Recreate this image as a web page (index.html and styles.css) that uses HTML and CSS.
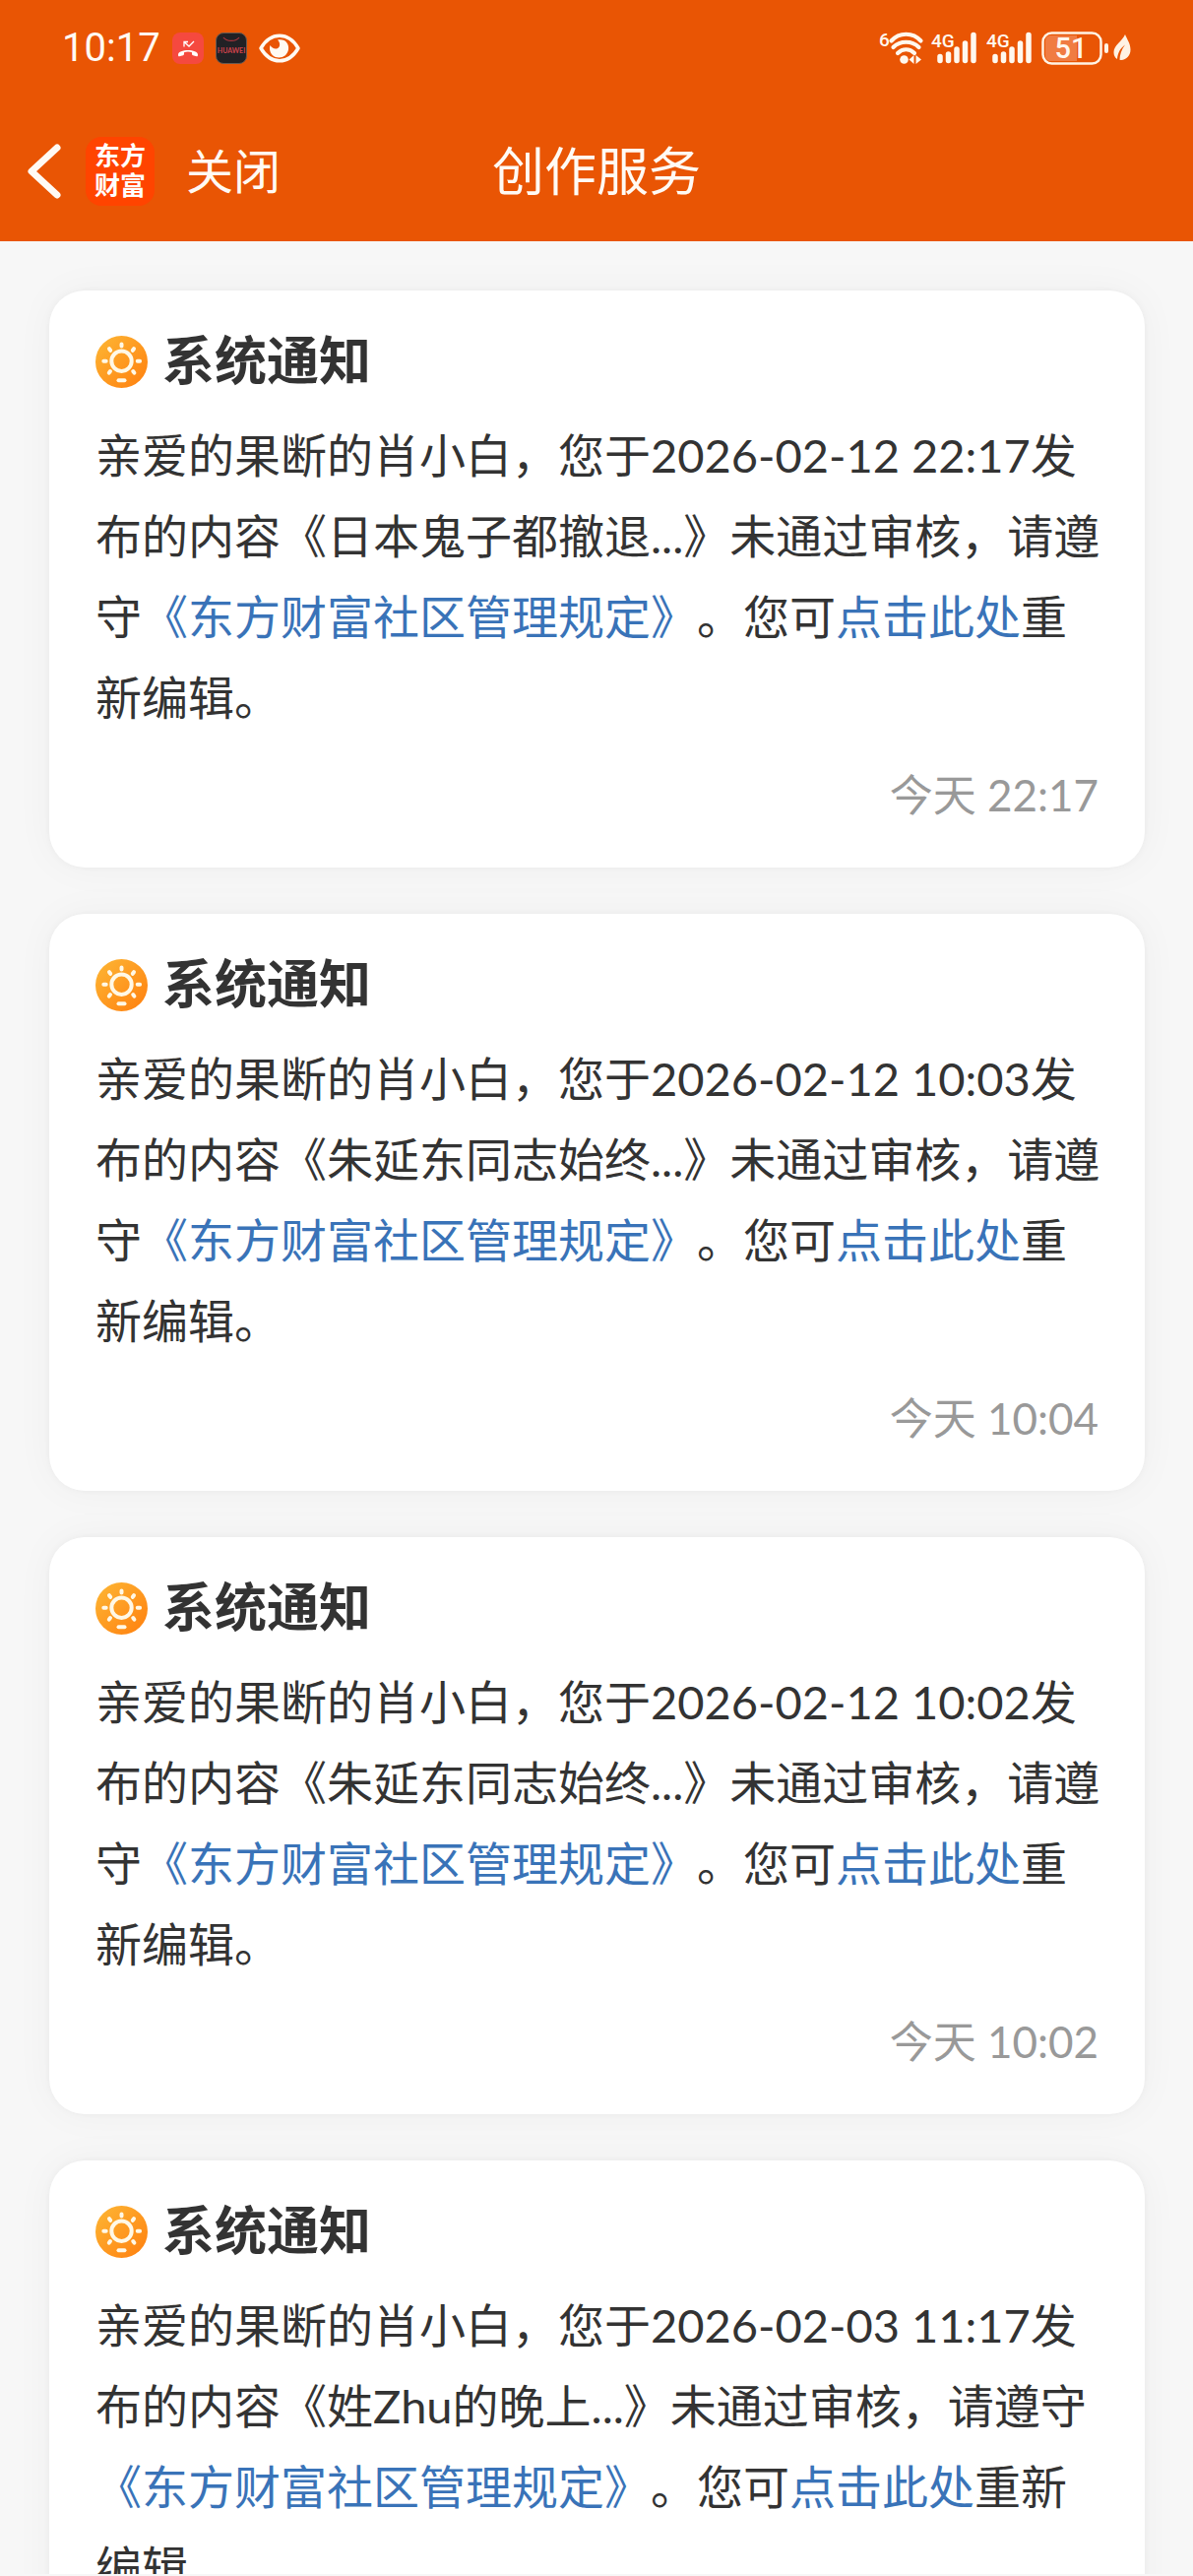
FILE: index.html
```html
<!DOCTYPE html>
<html lang="zh-CN">
<head>
    <meta charset="UTF-8">
    <meta name="viewport" content="width=device-width, initial-scale=1.0">
    <title>创作服务</title>
    <link rel="stylesheet" href="styles.css">
</head>
<body>
    <!-- shared icons -->
    <svg class="sprite" width="0" height="0">
        <defs>
            <linearGradient id="sunFill" x1="0" y1="0" x2="1" y2="1">
                <stop offset="0" stop-color="#fdb735"/>
                <stop offset="1" stop-color="#ff7f0e"/>
            </linearGradient>
        </defs>
        <symbol id="sun" viewBox="0 0 53 53">
            <circle cx="26.5" cy="26.5" r="26.5" fill="url(#sunFill)"/>
            <g fill="none" stroke="#fff8e6" stroke-width="4" stroke-linecap="round">
                <circle cx="26.5" cy="25.7" r="10.2"/>
                <path d="M26.5 8.6v2M8.3 25.7h2.4M42.7 25.7h2.4M14 13.2l1.2 1.6M39 13.2l-1.2 1.6M13.8 37.6l1.2-1.6M39.4 37.6l-1.2-1.6"/>
                <path d="M23.5 45.3h6"/>
            </g>
        </symbol>
    </svg>

    <header>
        <div class="status-bar">
            <div class="status-left">
                <span class="clock">10:17</span>
                <svg class="app-icon" viewBox="0 0 32 32">
                    <rect width="32" height="32" rx="8" fill="#f5493f"/>
                    <path d="M12 14.5V9.5h4M12 9.5l5 4.5 5-5" fill="none" stroke="#fff" stroke-width="1.3"/>
                    <path d="M6 22.5c0-6 20-6 20 0 0 1.800-.5 2-2 1.500l-3-.8c-1.200-.4-1-1.200-1-3-2-.8-6-.8-8 0 0 1.800.2 2.600-1 3l-3 .8c-1.500.5-2 .3-2-1.500z" fill="#fff"/>
                </svg>
                <svg class="app-icon" viewBox="0 0 32 32">
                    <rect x=".5" y=".5" width="31" height="31" rx="7.5" fill="#222125" stroke="#6b5a50"/>
                    <path d="M8 5c3 4.500 13 4.500 16 0" fill="none" stroke="#a8343c" stroke-width="1.2"/>
                    <text x="16" y="20.5" class="brand">HUAWEI</text>
                </svg>
                <svg class="eye-icon" viewBox="0 0 42 30">
                    <path d="M2 15C12-2 30-2 40 15 30 32 12 32 2 15z" fill="none" stroke="#fffaf2" stroke-width="3.5" stroke-linejoin="round"/>
                    <path d="M19 6.500c8-1.500 12 4 11 10-1 5-5 8-9.500 8-5 0-9-3.500-9.500-8.500 0-1.500 0-2.500.5-4 1.500 2.500 4 4 6.500 3.500 3.500-1 4.500-5.500 1-9z" fill="#fffaf2"/>
                </svg>
            </div>
            <div class="status-right">
                <svg class="wifi-icon" viewBox="0 0 45 34">
                    <text x="0" y="15" class="net-label">6</text>
                    <g fill="none" stroke="#fff8ee" stroke-width="4.2" stroke-linecap="round">
                        <path d="M12.500 9.500c8-9 22-9 30 0M14.500 16c7-7 19-7 26 0M19 22c5-5 12-5 17 0"/>
                    </g>
                    <circle cx="25.5" cy="28.5" r="4.3" fill="#fff8ee"/>
                    <path d="M35.500 24v9l-5-4.500zM37.500 24v9l5.500-4.500z" fill="#fff8ee"/>
                </svg>
                <svg class="signal-icon" viewBox="0 0 48 34">
                    <text x="0" y="16" class="net-label">4G</text>
                    <path d="M9 25.500v4M17.500 23v6.500M26 18v11.500M34.500 12v17.500M43 3.500v26" fill="none" stroke="#fff8ee" stroke-width="5.5" stroke-linecap="round"/>
                </svg>
                <svg class="signal-icon" viewBox="0 0 48 34">
                    <text x="0" y="16" class="net-label">4G</text>
                    <path d="M9 25.500v4M17.500 23v6.500M26 18v11.500M34.500 12v17.500M43 3.500v26" fill="none" stroke="#fff8ee" stroke-width="5.5" stroke-linecap="round"/>
                </svg>
                <svg class="battery-icon" viewBox="0 0 70 34">
                    <rect x="1.5" y="1.5" width="59" height="31" rx="9" fill="none" stroke="#fff3e4" stroke-width="2.5"/>
                    <path d="M36 4v26H10c-4 0-6-2-6-6V10c0-4 2-6 6-6z" fill="#f07c42"/>
                    <text x="30" y="27" class="battery-text">51</text>
                    <rect x="64" y="12" width="4" height="10" rx="2" fill="#fff3e4"/>
                </svg>
                <svg class="leaf-icon" viewBox="0 0 18 28">
                    <path d="M12 0c2 5 5.500 9 5.500 15.500 0 6-4 10-9.500 10.500l-1.500-.2c0-5 2-11 5.500-15.300C7 14 4.500 19 4 25 1.500 23.500.500 21 .5 18 .500 11 9 7 12 0z" fill="#fff3e4"/>
                </svg>
            </div>
        </div>
        <div class="nav-bar">
            <div class="nav-left">
                <button type="button" class="back-btn" aria-label="返回">
                    <svg viewBox="0 0 34 56"><path d="M30 4L4 28l26 24" fill="none" stroke="#fffaf4" stroke-width="7" stroke-linecap="round" stroke-linejoin="round"/></svg>
                </button>
                <a href="#home" class="logo">东方<br>财富</a>
                <button type="button" class="close-btn">关闭</button>
            </div>
            <h1>创作服务</h1>
        </div>
    </header>

    <main class="notice-list">
        <article class="card">
            <h2><svg class="sun-icon"><use href="#sun"/></svg>系统通知</h2>
            <p>亲爱的果断的肖小白，您于2026-02-12 22:17发布的内容《日本鬼子都撤退...》未通过审核，请遵守<a href="#rules">《东方财富社区管理规定》</a>。您可<a href="#edit">点击此处</a>重新编辑。</p>
            <time>今天 22:17</time>
        </article>

        <article class="card">
            <h2><svg class="sun-icon"><use href="#sun"/></svg>系统通知</h2>
            <p>亲爱的果断的肖小白，您于2026-02-12 10:03发布的内容《朱延东同志始终...》未通过审核，请遵守<a href="#rules">《东方财富社区管理规定》</a>。您可<a href="#edit">点击此处</a>重新编辑。</p>
            <time>今天 10:04</time>
        </article>

        <article class="card">
            <h2><svg class="sun-icon"><use href="#sun"/></svg>系统通知</h2>
            <p>亲爱的果断的肖小白，您于2026-02-12 10:02发布的内容《朱延东同志始终...》未通过审核，请遵守<a href="#rules">《东方财富社区管理规定》</a>。您可<a href="#edit">点击此处</a>重新编辑。</p>
            <time>今天 10:02</time>
        </article>

        <article class="card">
            <h2><svg class="sun-icon"><use href="#sun"/></svg>系统通知</h2>
            <p>亲爱的果断的肖小白，您于2026-02-03 11:17发布的内容《姓Zhu的晚上...》未通过审核，请遵守<a href="#rules">《东方财富社区管理规定》</a>。您可<a href="#edit">点击此处</a>重新编辑。</p>
        </article>
    </main>
</body>
</html>
```
FILE: styles.css
```css
* {
    box-sizing: border-box;
}

body {
    font-family: Lato, 'Noto Sans CJK SC', sans-serif;
    background-color: #f7f7f7;
    color: #333;
    margin: 0;
    padding-bottom: 2px;
    height: 100vh;
    display: flex;
    flex-direction: column;
    text-spacing-trim: space-all;
}

.sprite {
    position: absolute;
}

svg {
    display: block;
    flex-shrink: 0;
    overflow: visible;
}

header {
    background-color: #e95504;
    color: #fffaf4;
    flex-shrink: 0;
}

/* status bar */
.status-bar {
    display: flex;
    justify-content: space-between;
    align-items: center;
    height: 98px;
    padding: 0 63px;
}

.status-left {
    display: flex;
    align-items: center;
    gap: 12px;
}

.status-right {
    display: flex;
    align-items: center;
    gap: 8px;
}

.clock {
    font-family: Roboto, sans-serif;
    font-size: 40px;
    line-height: 48px;
}

.app-icon {
    width: 32px;
    height: 32px;
}

.eye-icon {
    width: 42px;
    height: 30px;
}

.wifi-icon {
    width: 45px;
    height: 34px;
}

.signal-icon {
    width: 48px;
    height: 34px;
}

.battery-icon {
    width: 70px;
    height: 34px;
}

.leaf-icon {
    width: 18px;
    height: 28px;
    margin-left: -5px;
}

.net-label {
    font-family: Roboto, sans-serif;
    font-size: 19px;
    font-weight: 500;
    fill: #fff8ee;
}

.battery-text {
    font-family: Roboto, sans-serif;
    font-size: 29px;
    font-weight: 500;
    text-anchor: middle;
    fill: #fff8ee;
}

.brand {
    font-family: Lato, sans-serif;
    font-size: 7px;
    font-weight: bold;
    text-anchor: middle;
    fill: #d0434c;
}

/* nav bar */
.nav-bar {
    display: grid;
    grid-template-columns: 1fr auto 1fr;
    align-items: center;
    height: 147px;
    padding: 4px 28px 0;
}

.nav-left {
    display: flex;
    align-items: center;
}

.nav-bar h1 {
    margin: 0;
    font-size: 53px;
    font-weight: normal;
    line-height: 72px;
}

button {
    background: none;
    border: none;
    padding: 0;
    color: inherit;
    font-family: inherit;
    cursor: pointer;
}

.back-btn svg {
    width: 34px;
    height: 56px;
}

.logo {
    width: 70px;
    height: 70px;
    margin: 0 32px 0 25px;
    padding-top: 4px;
    border-radius: 16px;
    background-color: #ff4400;
    color: #fff;
    font-size: 26px;
    font-weight: bold;
    line-height: 30px;
    text-align: center;
    text-decoration: none;
}

.close-btn {
    font-size: 48px;
    line-height: 72px;
}

/* notices */
.notice-list {
    flex: 1;
    min-height: 0;
    overflow: hidden;
    padding: 50px 49px 0 50px;
}

.card {
    background-color: #fff;
    padding: 46px 37px 42px 47px;
    border-radius: 36px;
    box-shadow: 0 0 6px rgba(0, 0, 0, 0.04), 0 0 40px rgba(0, 0, 0, 0.04);
    margin-bottom: 47px;
}

.card h2 {
    display: flex;
    align-items: flex-start;
    gap: 15px;
    margin: 0 0 27px;
    font-size: 53px;
    line-height: 50px;
}

.sun-icon {
    width: 53px;
    height: 53px;
}

.card p {
    margin: 0;
    font-size: 47px;
    line-height: 82px;
}

.card p a {
    color: #3973b8;
    text-decoration: none;
}

.card time {
    display: block;
    margin: 26px 10px 0 0;
    color: #999;
    font-size: 44px;
    line-height: 64px;
    text-align: right;
}
```
